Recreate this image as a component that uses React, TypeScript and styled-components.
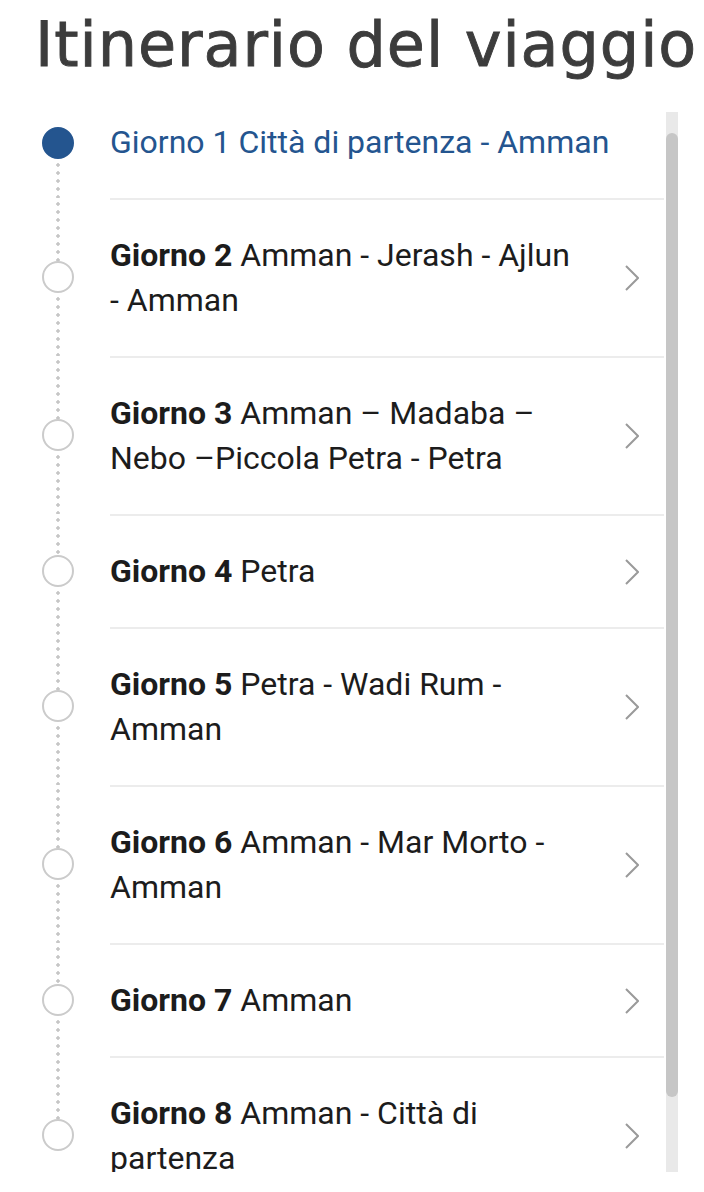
import React from 'react';
import styled, { createGlobalStyle } from 'styled-components';

const GlobalStyle = createGlobalStyle`
    html, body {
        margin: 0;
        padding: 0;
        background: #ffffff;
    }
    body {
        font-family: Roboto, 'Liberation Sans', sans-serif;
    }
`;

type Day = { day: number; route: string };

const days: Day[] = [
    { day: 1, route: 'Città di partenza - Amman' },
    { day: 2, route: 'Amman - Jerash - Ajlun - Amman' },
    { day: 3, route: 'Amman – Madaba – Nebo –Piccola Petra - Petra' },
    { day: 4, route: 'Petra' },
    { day: 5, route: 'Petra - Wadi Rum - Amman' },
    { day: 6, route: 'Amman - Mar Morto - Amman' },
    { day: 7, route: 'Amman' },
    { day: 8, route: 'Amman - Città di partenza' },
];

const Page = styled.div`
    width: 704px;
    height: 1192px;
    overflow: hidden;
`;

const Title = styled.h1`
    margin: 0 0 30px;
    padding: 8px 0 0 35px;
    font-family: 'DejaVu Sans', sans-serif;
    font-size: 62px;
    font-weight: 500;
    line-height: 74px;
    letter-spacing: 0.95px;
    color: #3c3c3c;
    white-space: nowrap;
    -webkit-text-stroke: 0.9px #3c3c3c;
`;

const Panel = styled.div`
    display: flex;
    height: 1060px;
`;

const List = styled.div`
    width: 664px;
    overflow: hidden;
`;

const Track = styled.div`
    width: 12px;
    margin-left: 2px;
    padding-top: 21px;
    background: #e9e9e9;
    box-sizing: border-box;
`;

const Thumb = styled.div`
    height: 964px;
    border-radius: 6px;
    background: #c6c6c6;
`;

const Row = styled.div`
    display: flex;
`;

const Marker = styled.div`
    width: 110px;
    flex: none;
    display: flex;
    flex-direction: column;
    align-items: flex-start;
    padding-left: 42px;
    box-sizing: border-box;
`;

const Segment = styled.div<{ $hidden?: boolean; $fixed?: number }>`
    width: 32px;
    flex: ${({ $fixed }) => ($fixed !== undefined ? `0 0 ${$fixed}px` : '1 1 0')};
    background: ${({ $hidden }) =>
        $hidden ? 'none' : 'radial-gradient(circle, #c6c6c6 1.5px, transparent 1.9px) center 2px / 4px 8px repeat-y'};
`;

const Dot = styled.div<{ $active?: boolean }>`
    width: 32px;
    height: 32px;
    flex: none;
    border-radius: 50%;
    box-sizing: border-box;
    border: 2px solid ${({ $active }) => ($active ? '#24558f' : '#cbcbcb')};
    background: ${({ $active }) => ($active ? '#24558f' : '#ffffff')};
`;

const Content = styled.div<{ $first?: boolean }>`
    flex: 1;
    display: flex;
    align-items: center;
    gap: 45px;
    padding: ${({ $first }) => ($first ? '8px 25px 33px 0' : '33px 25px 33px 0')};
    border-top: ${({ $first }) => ($first ? 'none' : '2px solid #ececec')};
`;

const Label = styled.div<{ $active?: boolean }>`
    flex: 1;
    font-size: 32px;
    line-height: 45px;
    color: ${({ $active }) => ($active ? '#24558f' : '#1c1c1c')};

    b {
        font-weight: 700;
    }
`;

const Chevron = () => (
    <svg width="14" height="26" viewBox="0 0 14 26" fill="none">
        <polyline points="1,1 13,13 1,25" stroke="#9a9a9a" strokeWidth="2" />
    </svg>
);

export default function App() {
    return (
        <Page>
            <GlobalStyle />
            <Title>Itinerario del viaggio</Title>
            <Panel>
                <List>
                    {days.map((d, i) => {
                        const first = i === 0;
                        const last = i === days.length - 1;
                        return (
                            <Row key={d.day}>
                                <Marker>
                                    <Segment $hidden={first} $fixed={first ? 15 : undefined} />
                                    <Dot $active={first} />
                                    <Segment $hidden={last} />
                                </Marker>
                                <Content $first={first}>
                                    {first ? (
                                        <Label $active>
                                            Giorno {d.day} {d.route}
                                        </Label>
                                    ) : (
                                        <>
                                            <Label>
                                                <b>Giorno {d.day}</b> {d.route}
                                            </Label>
                                            <Chevron />
                                        </>
                                    )}
                                </Content>
                            </Row>
                        );
                    })}
                </List>
                <Track>
                    <Thumb />
                </Track>
            </Panel>
        </Page>
    );
}
